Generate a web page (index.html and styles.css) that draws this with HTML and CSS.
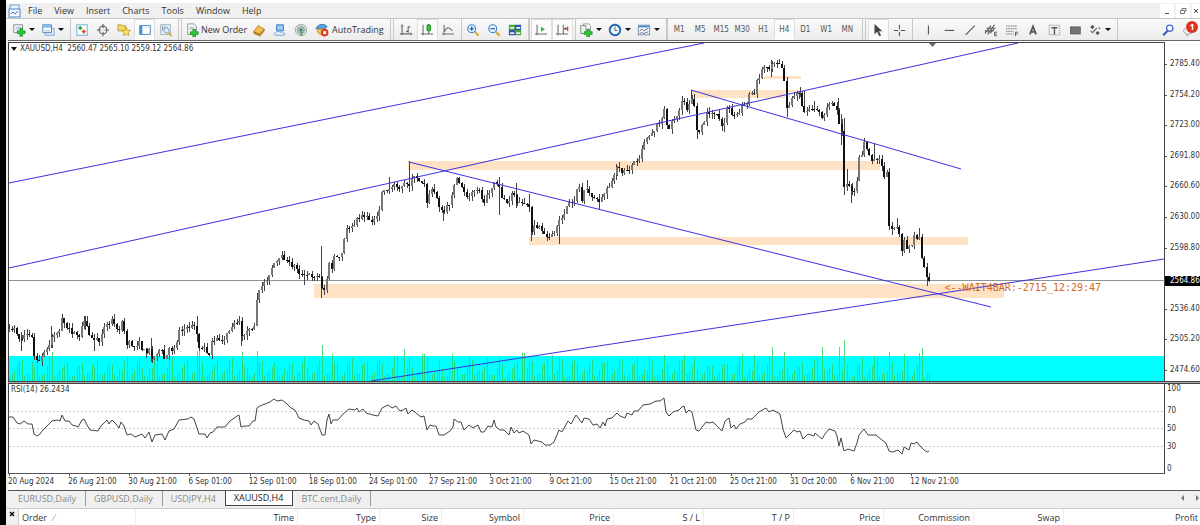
FILE: index.html
```html
<!DOCTYPE html>
<html lang="en">
<head>
<meta charset="utf-8">
<title>XAUUSD,H4</title>
<link rel="stylesheet" href="styles.css">
</head>
<body>
<div class="app">
  <header class="menubar">
    <svg class="app-icon" viewBox="0 0 14 14"><rect x="2" y="1" width="9" height="6" fill="#eaf3fd" stroke="#6f9fd8"/><rect x="1" y="5" width="11" height="8" fill="#f4f9ff" stroke="#4a84cc"/><path d="M3 10l2-2 2 2 3-3" fill="none" stroke="#3d77c2"/></svg>
    <nav class="menu">
      <button>File</button><button>View</button><button>Insert</button><button>Charts</button><button>Tools</button><button>Window</button><button>Help</button>
    </nav>
    <div class="window-controls">
      <button aria-label="Minimize"><svg viewBox="0 0 8 8"><path d="M2 6.500h4" stroke="#555"/></svg></button>
      <button aria-label="Restore"><svg viewBox="0 0 8 8"><path d="M3 3V1.500h4V4H5.500M1.500 3.500h4v3h-4z" fill="none" stroke="#777"/></svg></button>
      <button aria-label="Close"><svg viewBox="0 0 8 8"><path d="M2 2l4 4M6 2l-4 4" stroke="#446"/></svg></button>
    </div>
  </header>

  <div class="toolbar">
    <div class="group">
      <button class="tool drop" aria-label="New chart"><svg viewBox="0 0 16 16"><path d="M2 2h10v9H2z" fill="#f5f9fc" stroke="#7b8794"/><path d="M4 5h6M4 7h4" stroke="#8fb0d0"/><path d="M9 6h3v3h3v3h-3v3H9v-3H6V9h3z" fill="#2dcb35" stroke="#16851e" stroke-width=".8"/></svg></button>
      <button class="tool drop" aria-label="Profiles"><svg viewBox="0 0 16 16"><path d="M5 6h10v8H5z" fill="#dcebfa" stroke="#7fa5d0"/><path d="M2 2h10v9H2z" fill="#f4f9ff" stroke="#3f7fc6"/><path d="M2.500 4h9" stroke="#69a3e2" stroke-width="2"/><path d="M4 9h6" stroke="#9bb"/></svg></button>
    </div>
    <div class="group">
      <button class="tool" aria-label="Market Watch"><svg viewBox="0 0 16 16"><rect x="2" y="2" width="12" height="12" fill="#fff" stroke="#8bc4df" stroke-width="1.500"/><path d="M6 3l2.700 2.700L6 8.400 3.300 5.700z" fill="#35a546"/><path d="M10 7l2.700 2.700L10 12.400 7.300 9.700z" fill="#e0563a"/></svg></button>
      <button class="tool" aria-label="Data Window"><svg viewBox="0 0 16 16"><circle cx="8" cy="8" r="4.500" fill="none" stroke="#666" stroke-width="1.300"/><path d="M8 1v5M8 10v5M1 8h5M10 8h5" stroke="#666" stroke-width="1.300"/></svg></button>
      <button class="tool" aria-label="Navigator"><svg viewBox="0 0 16 16"><path d="M1 2h4l1 1h4v6H1z" fill="#f2d469" stroke="#c29a2d"/><path d="M10.500 5l1.500 3.200 3.500.4-2.600 2.400.7 3.500-3.100-1.800-3.100 1.800.7-3.500L5.600 8.600l3.400-.4z" fill="#fbe15a" stroke="#b3912a" stroke-width=".8"/></svg></button>
      <button class="tool pressed" aria-label="Terminal"><svg viewBox="0 0 16 16"><rect x="2" y="3" width="12" height="10" fill="#fff" stroke="#3e7cc0"/><path d="M3.500 3v10" stroke="#4d8fd8" stroke-width="3"/><path d="M7 5h6" stroke="#cfe1f4"/></svg></button>
      <button class="tool" aria-label="Strategy Tester"><svg viewBox="0 0 16 16"><rect x="2" y="2" width="11" height="11" fill="#eef3f7" stroke="#9aa9b6"/><path d="M4 4v5M6 3v4M9 4v4" stroke="#6e8eae"/><circle cx="8.500" cy="8.500" r="3" fill="#dcecf8" stroke="#7a97b3"/><path d="M11 11l3.500 4" stroke="#d9a62b" stroke-width="2"/></svg></button>
    </div>
    <div class="group handle">
      <button class="tool labelled order"><svg viewBox="0 0 16 16"><path d="M3 1h7l3 3v9H3z" fill="#f7f9fa" stroke="#82909a"/><path d="M5 5h5M5 7h4" stroke="#93a7b7"/><path d="M9 7h3v3h3v3h-3v3H9v-3H6v-3h3z" fill="#2dcb35" stroke="#16851e" stroke-width=".8"/></svg>New Order</button>
      <button class="tool" aria-label="MetaEditor"><svg viewBox="0 0 16 16"><path d="M2 10l5-7 7 4-5 6z" fill="#f1c04a" stroke="#ac7c1c"/><path d="M2 10l7 3 5-6v2l-5 6-7-3z" fill="#c98f23" stroke="#96691a" stroke-width=".6"/></svg></button>
      <button class="tool" aria-label="Virtual hosting"><svg viewBox="0 0 16 16"><path d="M4 2h8v7H4z" fill="#8fc2f5" stroke="#3a78bd"/><path d="M6 5h1M9 5h1" stroke="#fff"/><path d="M3 14c-2 0-2-3 .5-3C4 9 7 9 8 10.500c2-1 3.500 0 3.500 1 3 0 2.500 2.500 1 2.500z" fill="#e6f1fb" stroke="#6f9cc6"/></svg></button>
      <button class="tool" aria-label="Signals"><svg viewBox="0 0 16 16"><circle cx="8" cy="8" r="6.500" fill="#d3dbd8" stroke="#9aa8a2"/><circle cx="8" cy="8" r="3.800" fill="#b9c9c2" stroke="#7d9a90"/><circle cx="8" cy="8" r="1.800" fill="#3e7564"/><path d="M8.500 8v6.500" stroke="#45a552" stroke-width="2"/></svg></button>
      <button class="tool labelled auto"><svg viewBox="0 0 16 16"><path d="M1 6c3-5 9-6 13-2l-3 3z" fill="#5c9fdd" stroke="#3273b4"/><path d="M2 7h10l-3 7-5-2z" fill="#f0ca58" stroke="#b8912d"/><circle cx="11" cy="11" r="4.300" fill="#df3b25"/><rect x="9.300" y="9.300" width="3.400" height="3.400" fill="#fff"/></svg>AutoTrading</button>
    </div>
    <div class="group handle">
      <button class="tool" aria-label="Bar chart"><svg viewBox="0 0 16 16"><path d="M3.500 2v12M1 12.500h14M10.500 4v7M8 9.500h2.500M10.500 4.500H13" fill="none" stroke="#64706b" stroke-width="1.300"/><path d="M2 4l1.500-2L5 4M13 11l2 1.500-2 1.500" fill="none" stroke="#777"/></svg></button>
      <button class="tool pressed" aria-label="Candlesticks"><svg viewBox="0 0 16 16"><path d="M3.500 2v12M1 12.500h14M10 1v11" stroke="#64706b" stroke-width="1.200"/><rect x="8" y="2" width="4" height="7" rx="1" fill="#2ecb3a" stroke="#188424"/></svg></button>
      <button class="tool" aria-label="Line chart"><svg viewBox="0 0 16 16"><path d="M3.500 2v12M1 12.500h14M4 10c2-6 5-6 9-1" fill="none" stroke="#6b7470" stroke-width="1.200"/></svg></button>
    </div>
    <div class="group line">
      <button class="tool" aria-label="Zoom in"><svg viewBox="0 0 16 16"><path d="M10 10l4.500 4.500" stroke="#d8ad37" stroke-width="2.500"/><circle cx="6.500" cy="6.500" r="4.500" fill="#e6f4ff" stroke="#4386ca" stroke-width="1.300"/><path d="M4 6.500h5M6.500 4v5" stroke="#2669b6" stroke-width="1.500"/></svg></button>
      <button class="tool" aria-label="Zoom out"><svg viewBox="0 0 16 16"><path d="M10 10l4.500 4.500" stroke="#d8ad37" stroke-width="2.500"/><circle cx="6.500" cy="6.500" r="4.500" fill="#e6f4ff" stroke="#4386ca" stroke-width="1.300"/><path d="M4 6.500h5" stroke="#2669b6" stroke-width="1.500"/></svg></button>
      <button class="tool" aria-label="Tile windows"><svg viewBox="0 0 16 16"><path d="M1 2h7v6H1z" fill="#48a636"/><path d="M8 2h7v6H8z" fill="#3157ae"/><path d="M1 8h7v6H1z" fill="#3157ae"/><path d="M8 8h7v6H8z" fill="#48a636"/><path d="M2.500 5.500H7M9.500 5.500H14M2.500 11.500H7M9.500 11.500H14" stroke="#eef5fb" stroke-width="2"/></svg></button>
    </div>
    <div class="group handle narrow">
      <button class="tool pressed" aria-label="Auto scroll"><svg viewBox="0 0 16 16"><path d="M3.500 2v12M1 12.500h14" stroke="#64706b" stroke-width="1.200"/><path d="M8 4l4.500 3L8 10z" fill="#2fb83b"/></svg></button>
      <button class="tool pressed" aria-label="Chart shift"><svg viewBox="0 0 16 16"><path d="M3.500 2v12M1 12.500h14M9.500 2v10" stroke="#64706b" stroke-width="1.200"/><path d="M14.500 4v5M14 6.500h-3" stroke="#aa4038" stroke-width="1.300"/><path d="M10 6.500l2.500-2v4z" fill="#c33b30"/></svg></button>
    </div>
    <div class="group line">
      <button class="tool drop" aria-label="Indicators"><svg viewBox="0 0 16 16"><path d="M5 1h6l2 2v9H5z" fill="#fff" stroke="#8a9298"/><path d="M2 3h6v9H2z" fill="#eef3ee" stroke="#748279"/><path d="M9 7h3v3h3v3h-3v3H9v-3H6v-3h3z" fill="#2dcb35" stroke="#16851e" stroke-width=".8"/></svg></button>
      <button class="tool drop" aria-label="Periods"><svg viewBox="0 0 16 16"><circle cx="8" cy="8" r="6" fill="#eef6ff" stroke="#2468ae" stroke-width="2.200"/><path d="M8 4v4.500h3" fill="none" stroke="#456"/></svg></button>
      <button class="tool drop" aria-label="Templates"><svg viewBox="0 0 16 16"><rect x="1.500" y="2.500" width="13" height="11" fill="#eef4f8" stroke="#6a8cae"/><path d="M2 4h12" stroke="#4c8fd0" stroke-width="2"/><path d="M3 9l3-2 2 2 5-3M3 12l3-1 2 1 5-2" fill="none" stroke="#668"/></svg></button>
    </div>
    <div class="group handle narrow periods">
      <button class="tool">M1</button><button class="tool">M5</button><button class="tool">M15</button><button class="tool">M30</button><button class="tool">H1</button><button class="tool pressed">H4</button><button class="tool">D1</button><button class="tool">W1</button><button class="tool">MN</button>
    </div>
    <div class="group handle">
      <button class="tool pressed" aria-label="Cursor"><svg viewBox="0 0 16 16"><path d="M4 1v12l3-3 2.500 5 2-1-2.500-4.500H13z" fill="#444"/></svg></button>
      <button class="tool" aria-label="Crosshair"><svg viewBox="0 0 16 16"><path d="M8.500 2v5M8.500 10v5M2 8.500h5M10 8.500h5" stroke="#555" stroke-width="1.200"/></svg></button>
    </div>
    <div class="group line shapes">
      <button class="tool" aria-label="Vertical line"><svg viewBox="0 0 16 16"><path d="M8.500 3v10" stroke="#555" stroke-width="1.300"/></svg></button>
      <button class="tool" aria-label="Horizontal line"><svg viewBox="0 0 16 16"><path d="M3 8.500h11" stroke="#555" stroke-width="1.300"/></svg></button>
      <button class="tool" aria-label="Trendline"><svg viewBox="0 0 16 16"><path d="M3 13.500L13.500 3" stroke="#555" stroke-width="1.300"/></svg></button>
      <button class="tool" aria-label="Equidistant channel"><svg viewBox="0 0 16 16"><path d="M1 12L8 3M4 13l8-11M1 9h10M3 6h10M7 12l5-6" stroke="#555" stroke-width="1.200"/><path d="M15 10.500h-3v4h3M12 12.500h2.500" fill="none" stroke="#555"/></svg></button>
      <button class="tool" aria-label="Fibonacci retracement"><svg viewBox="0 0 16 16"><path d="M1 3.500h13M1 6.500h13M1 9.500h9M1 12.500h9" stroke="#777" stroke-dasharray="2 .6"/><path d="M12 15v-4.500h3M12 12.500h2.500" fill="none" stroke="#555"/></svg></button>
      <button class="tool" aria-label="Text"><svg viewBox="0 0 16 16"><path d="M4.500 13L8 4l3.500 9M5.500 10h5" fill="none" stroke="#555" stroke-width="2"/></svg></button>
      <button class="tool" aria-label="Text label"><svg viewBox="0 0 16 16"><rect x="2.500" y="2.500" width="12" height="11" fill="none" stroke="#888" stroke-dasharray="1.500 1"/><path d="M5 5.500h7M8.500 5v8" stroke="#555" stroke-width="1.600"/></svg></button>
      <button class="tool" aria-label="Rectangle"><svg viewBox="0 0 16 16"><rect x="3" y="4.500" width="11" height="8" fill="#777" stroke="#555"/></svg></button>
      <button class="tool drop" aria-label="Arrows"><svg viewBox="0 0 16 16"><path d="M5 2l2.500 2.500L5 7 2.500 4.500zM11 9l2.500 2.500L11 14l-2.500-2.500z" fill="#555"/><path d="M3 9l2 2 5-5M12 5l2 2" fill="none" stroke="#666" stroke-width="1.300"/></svg></button>
    </div>
    <div class="group line end">
      <button class="tool" aria-label="Search"><svg viewBox="0 0 16 16"><path d="M7.500 9L2.500 14" stroke="#2a57b0" stroke-width="2.200"/><circle cx="10" cy="6" r="3.600" fill="#f8fbff" stroke="#3f6fc8" stroke-width="1.500"/></svg></button>
      <button class="tool alerts" aria-label="Notifications"><svg viewBox="0 0 16 16"><path d="M4 6c-3 1-3 6 1 6l1 3 2-3h3" fill="#eee" stroke="#999"/></svg><span class="badge">1</span></button>
    </div>
  </div>

  <main class="chart">
    <section class="plot">
      <svg class="layer" viewBox="9 43 1155 338" preserveAspectRatio="none">
        <rect class="volume-zone" x="9" y="356" width="1155" height="25"/>
        <g class="zones">
          <rect x="314" y="284" width="690" height="14"/>
          <rect x="529" y="237" width="439" height="8"/>
          <rect x="408" y="161" width="472" height="9"/>
          <rect x="691" y="90" width="94" height="8"/>
          <rect x="785" y="90" width="16" height="2"/>
          <rect x="764" y="76" width="37" height="3"/>
        </g>
        <path id="volume" class="volume"/>
        <path class="bid-line" d="M9 280.500H1164"/>
        <path id="wicks" class="wicks"/>
        <path id="bulls" class="bulls"/>
        <path id="bears" class="bears"/>
        <path class="trend" d="M9 183L704 43M9 268L1018 43M409 162L991 307M691 90L961 169M371 381L1164 259"/>
        <path class="shift-mark" d="M929 43h7l-3.500 4z"/>
      </svg>
      <h1 class="caption"><span class="caret"></span><span>XAUUSD,H4&nbsp; 2560.47 2565.10 2559.12 2564.86</span></h1>
      <p class="countdown">&lt;--WAIT4BAR:-2715_12:29:47</p>
    </section>
    <div class="scale prices">
      <span>2785.40</span><span>2754.20</span><span>2723.00</span><span>2691.80</span><span>2660.60</span><span>2630.00</span><span>2598.80</span><span></span><span>2536.40</span><span>2505.20</span><span>2474.60</span>
      <strong class="bid">2564.86</strong>
    </div>
    <div class="divider"></div>
    <section class="rsi">
      <svg class="layer" viewBox="9 384 1155 89" preserveAspectRatio="none">
        <path class="levels" d="M9 411.500H1164M9 428.500H1164M9 446.500H1164"/>
        <path id="rsi" class="rsi-line"/>
      </svg>
      <h2 class="caption">RSI(14) 26.2434</h2>
    </section>
    <div class="scale levels-scale"><span>100</span><span>70</span><span>50</span><span>30</span><span>0</span></div>
    <div class="times">
      <span>20 Aug 2024</span><span>26 Aug 21:00</span><span>30 Aug 21:00</span><span>6 Sep 01:00</span><span>12 Sep 01:00</span><span>18 Sep 01:00</span><span>24 Sep 01:00</span><span>27 Sep 21:00</span><span>3 Oct 21:00</span><span>9 Oct 21:00</span><span>15 Oct 21:00</span><span>21 Oct 21:00</span><span>25 Oct 21:00</span><span>31 Oct 20:00</span><span>6 Nov 21:00</span><span>12 Nov 21:00</span>
    </div>
  </main>

  <div class="tabs">
    <button>EURUSD,Daily</button><button>GBPUSD,Daily</button><button>USDJPY,H4</button><button class="active">XAUUSD,H4</button><button>BTC.cent,Daily</button>
    <div class="tab-arrows"><button aria-label="Previous tab"><svg viewBox="0 0 6 8"><path d="M4 1v6L1 4z" fill="#777"/></svg></button><button aria-label="Next tab"><svg viewBox="0 0 6 8"><path d="M2 1v6l3-3z" fill="#777"/></svg></button></div>
  </div>

  <div class="terminal">
    <button class="close" aria-label="Close terminal"><svg viewBox="0 0 8 8"><path d="M2 2l4 4M6 2l-4 4" stroke="#000" stroke-width="1.300"/></svg></button>
    <table class="orders">
      <colgroup><col class="c-order"><col class="c-time"><col class="c-type"><col class="c-size"><col class="c-type"><col class="c-num"><col class="c-num"><col class="c-num"><col class="c-num"><col class="c-num"><col class="c-num"><col></colgroup>
      <thead><tr><th class="first">Order <span class="sort">⁄</span></th><th>Time</th><th>Type</th><th>Size</th><th>Symbol</th><th>Price</th><th>S / L</th><th>T / P</th><th>Price</th><th>Commission</th><th>Swap</th><th>Profit</th></tr></thead>
    </table>
  </div>
</div>
<script src="chart.js"></script>
</body>
</html>
```
FILE: styles.css
```css
* { box-sizing: border-box; }

body {
  margin: 0;
  background: #000;
  color: #333;
  font-family: "Open Sans", "Noto Sans", sans-serif;
  font-size: 9px;
}

button {
  margin: 0;
  padding: 0;
  border: 0;
  background: none;
  color: inherit;
  font: inherit;
  white-space: nowrap;
}

svg { display: block; }

.app {
  display: flex;
  flex-direction: column;
  height: 100vh;
  margin-left: 6px;
  border-top: 3px solid #fff;
  background: #f0f0f0;
  overflow: hidden;
}

.menubar {
  display: flex;
  flex: none;
  align-items: center;
  height: 15px;
  padding-left: 2px;
}

.app-icon { width: 14px; height: 14px; margin-right: 6px; }

.menu { display: flex; gap: 12px; }

.window-controls { display: flex; gap: 2px; margin-left: auto; }
.window-controls button { padding: 3px; background: #fff; }
.window-controls svg { width: 8px; height: 8px; }
.window-controls button:last-child { padding: 3px 0; }

.toolbar {
  display: flex;
  flex: none;
  align-items: stretch;
  height: 22px;
  padding-left: 4px;
  border-top: 1px solid #c4c4c4;
  background: linear-gradient(#fafafa, #ececec);
}

.group { display: flex; align-items: stretch; padding-right: 2px; border-right: 1px solid #c8c8c8; }
.group.line { padding-left: 1px; }
.group.handle { margin-left: 2px; padding-left: 2px; border-left: 1px solid #c8c8c8; }
.group.narrow { margin-left: 0; padding-left: 1px; }

.tool {
  position: relative;
  display: flex;
  flex: none;
  align-items: center;
  justify-content: center;
  width: 21px;
}
.tool svg { width: 14px; height: 14px; }
.tool.pressed { background: #fbfbfb; border: 1px solid #dedede; border-bottom-color: #fff; }
.tool.drop { width: 29px; justify-content: flex-start; padding-left: 2px; }
.tool.drop::after {
  content: "";
  margin-left: 3px;
  border: 3px solid transparent;
  border-top-color: #111;
  border-bottom: 0;
}
.tool.labelled { width: auto; gap: 2px; padding: 0 1px; }
.tool.auto { gap: 3px; padding: 0 4px; }
.group.periods { padding-right: 4px; color: #555; font-family: "DejaVu Sans Condensed", "Open Sans", sans-serif; font-size: 8px; }
.group.shapes { padding-left: 5px; }

.group.end { margin-left: auto; padding-right: 1px; border: 0; }
.badge {
  position: absolute;
  top: 2px;
  left: 8px;
  width: 12px;
  height: 12px;
  border-radius: 6px;
  background: #dc3324;
  color: #fff;
  font-weight: 700;
  line-height: 12px;
  text-align: center;
}

.chart {
  display: grid;
  flex: 1;
  grid-template-columns: 1fr 35px;
  grid-template-rows: 339fr 3px 90fr 16px;
  min-height: 0;
  margin-left: 2px;
  padding-top: 1px;
  border-top: 1px solid #666;
  border-bottom: 1px solid #555;
  background: #fff;
  font-family: "DejaVu Sans Condensed", "Open Sans", sans-serif;
  font-size: 8px;
  line-height: 10px;
}

.plot, .rsi { position: relative; min-height: 0; border-left: 1px solid #444; border-right: 1px solid #444; }
.plot { border-top: 1px solid #444; }
.rsi { border-bottom: 1px solid #555; }
.layer { width: 100%; height: 100%; }

.volume-zone { fill: #00ffff; }
.zones { fill: #ffe2c4; }
.volume { fill: #30d060; fill-opacity: .8; shape-rendering: crispEdges; }
.bid-line { stroke: #8c9498; }
.wicks { fill: #444; shape-rendering: crispEdges; }
.bulls { fill: #777; shape-rendering: crispEdges; }
.bears { fill: #111; shape-rendering: crispEdges; }
.trend { fill: none; stroke: #3c32e0; }
.shift-mark { fill: #666; }
.levels { fill: none; stroke: #c8c8c8; stroke-dasharray: 2 2; }
.rsi-line { fill: none; stroke: #444; }

.caption {
  position: absolute;
  top: 1px;
  left: 2px;
  display: flex;
  align-items: center;
  gap: 3px;
  margin: 0;
  font-size: 8px;
  font-weight: 400;
}
.caret { border: 3px solid transparent; border-top: 4px solid #111; border-bottom: 0; }

.countdown {
  position: absolute;
  top: 71%;
  left: 81%;
  margin: 0;
  color: #d2691e;
  font-family: "DejaVu Sans Mono", monospace;
  font-size: 10px;
  white-space: nowrap;
}

.scale { position: relative; display: flex; flex-direction: column; justify-content: space-between; min-height: 0; }
.scale span { min-height: 10px; padding-left: 5px; }
.scale span::before { content: ""; float: left; width: 2px; height: 1px; margin: 5px 0 0 -5px; background: #555; }
.prices { padding: 17px 0 6px; }
.bid {
  position: absolute;
  top: 69%;
  left: 0;
  width: 100%;
  padding-left: 5px;
  background: #000;
  color: #fff;
  font-weight: 400;
}

.divider { grid-column: 1 / -1; border-top: 1px solid #444; border-bottom: 1px solid #444; background: #aaa; }
.levels-scale span { padding-left: 2px; }
.levels-scale span::before { display: none; }
.levels-scale span:first-child { margin-bottom: 4px; }
.levels-scale span:last-child { margin-top: 4px; }

.times { display: flex; grid-column: 1; align-items: center; min-width: 0; }
.times span { position: relative; flex: 0 0 5.2%; white-space: nowrap; }
.times span::before { content: ""; position: absolute; top: -3px; left: 1px; width: 1px; height: 2px; background: #555; }

.tabs {
  display: flex;
  flex: none;
  align-items: flex-start;
  height: 17px;
  padding-left: 4px;
  color: #888;
}
.tabs > button { height: 15px; padding: 0 9px 0 8px; border-right: 1px solid #999; line-height: 14px; }
.tabs > .active { border: 1px solid #444; border-top: 0; background: #fff; color: #222; }
.tabs > button:has(+ .active) { border-right: 0; }
.tab-arrows { display: flex; gap: 8px; margin-left: auto; padding-top: 3px; }
.tab-arrows svg { width: 6px; height: 8px; }

.terminal { display: flex; flex: none; align-items: flex-start; height: 17px; border-top: 1px solid #ccc; background: #f0f0f0; }
.close { width: 12px; padding: 1px 2px; }
.close svg { width: 8px; height: 8px; }
.orders { width: 100%; table-layout: fixed; border-collapse: collapse; background: #fff; border-left: 1px solid #ccc; }
.orders th { height: 17px; padding: 0 3px; border-right: 1px solid #eee; font-weight: 400; line-height: 16px; text-align: right; white-space: nowrap; }
.orders th:last-child { padding-right: 2px; border: 0; }
.orders .first { text-align: left; }
.sort { padding-left: 4px; color: #999; }
.c-order { width: 117px; }
.c-time { width: 162px; }
.c-type { width: 82px; }
.c-size { width: 62px; }
.c-num { width: 90px; }
```
FILE: chart.js
```js
// Closing levels as "x,y" pairs in plot units.
const closes = `9,331 14,327 17,333 20,341 23,335 27,334 33,338 34,356 37,361 40,363 42,357 45,352 48,348 50,345 52,336 56,333 60,331 62,320 65,326 68,328 71,332 75,334 79,336 82,327 84,323 87,328 89,335 92,339 96,340 99,340 102,332 106,325 110,324 112,318 116,326 119,330 122,321 124,330 127,344 130,343 134,347 139,343 143,350 148,352 150,345 152,359 157,352 162,352 165,362 169,350 172,350 177,342 179,329 185,329 190,327 194,325 196,328 199,347 202,348 206,348 208,357 212,343 218,339 222,340 226,337 231,327 236,323 239,321 241,336 245,333 249,331 253,326 256,325 257,300 259,292 262,285 266,280 270,275 273,265 277,262 282,257 286,260 291,265 296,267 300,274 304,276 309,275 316,276 321,278 322,287 325,291 326,288 328,271 330,254 332,270 334,255 338,259 342,253 344,240 348,226 352,228 358,218 362,215 368,219 374,220 378,217 380,205 382,192 386,189 391,190 395,182 400,190 405,183 409,186 412,176 415,178 419,180 424,184 427,202 430,189 436,193 440,210 444,212 450,202 454,184 456,179 460,184 463,187 466,198 470,196 475,187 480,192 484,204 487,195 491,189 494,181 498,186 501,196 505,200 508,205 513,192 517,205 522,202 527,205 530,210 531,232 535,225 540,227 545,234 550,238 554,233 558,224 560,219 565,213 569,202 573,204 576,190 579,187 582,201 585,188 590,194 595,199 600,203 604,194 607,188 612,181 617,168 622,172 626,170 630,168 635,160 640,157 643,143 648,136 653,131 658,123 662,118 664,110 667,126 669,127 673,119 678,114 681,103 684,102 687,109 691,96 693,100 695,112 697,131 700,132 704,121 708,112 712,112 717,114 722,125 725,122 728,104 732,116 736,114 738,118 742,105 746,106 750,93 754,94 757,81 761,72 764,66 767,65 770,71 772,62 776,61 780,64 783,68 785,94 787,109 790,103 795,94 800,91 803,112 807,111 811,107 815,108 820,111 823,119 826,111 829,106 832,103 835,106 838,110 840,140 842,130 844,187 846,184 850,189 854,190 857,182 859,158 862,154 864,142 867,148 870,160 873,159 876,158 881,163 884,175 887,174 889,224 893,228 897,225 900,239 902,249 905,236 907,248 912,246 914,235 917,240 919,239 921,252 923,264 926,272 928,285 929,280`;

const spikes = `21,332,351 51,326,348 85,316,330 94,340,351 112,316,326 146,348,358 151,338,362 197,316,342 239,316,322 241,330,346 257,293,326 304,272,285 321,246,298 389,177,194 409,161,192 443,210,221 499,177,215 516,183,208 529,194,212 531,207,241 559,216,244 587,180,193 599,196,209 616,164,180 691,90,102 697,110,139 724,118,132 771,60,77 787,92,117 800,87,97 804,91,113 814,101,112 838,98,115 841,114,145 844,118,195 847,169,189 851,184,203 864,138,154 874,143,158 889,178,229 892,222,235 897,218,228 902,239,256 919,228,240 927,265,286`;

const volumes = `21,360 51,352 126,357 197,351 199,345 242,352 257,351 321,345 331,354 405,349 423,354 451,354 500,357 523,353 551,355 771,347 785,352 741,354 684,355 822,347 839,347 844,340 889,352 904,354 919,353 921,348`;

const rsi = "9,417 13,417 17,423 20,424 24,421 28,424 32,424 34,434 37,436 40,434 43,430 46,427 50,423 52,421 57,420 60,421 62,415 65,421 69,421 72,425 76,426 78,427 82,420 84,419 87,425 90,430 98,431 101,426 105,422 107,420 109,424 112,420 116,424 119,428 121,422 124,426 127,435 131,434 135,437 142,434 145,438 149,432 152,442 155,435 162,434 165,440 169,431 174,429 179,420 188,419 191,417 194,419 199,434 205,434 207,438 210,433 213,432 217,427 225,427 230,421 237,416 239,415 241,427 245,426 249,426 253,421 255,421 257,408 260,406 265,404 270,402 274,399 277,401 282,400 286,403 291,408 295,410 299,418 304,420 309,421 311,425 314,421 318,424 322,435 325,435 327,420 329,414 331,424 333,420 338,420 343,414 349,409 355,410 357,408 359,412 363,409 366,413 373,415 378,416 382,408 388,405 392,408 396,406 400,411 403,410 406,408 408,414 412,410 416,413 421,417 424,416 427,430 430,425 433,426 436,426 439,435 444,435 450,431 453,427 454,419 458,422 461,422 464,430 469,425 473,428 478,425 481,432 484,432 488,426 492,427 494,420 496,427 500,430 504,430 509,435 511,427 514,433 517,430 519,433 523,431 529,435 531,444 534,440 542,442 545,445 550,445 554,442 559,430 562,432 568,421 571,424 576,415 582,423 584,418 589,419 593,425 597,424 600,428 603,422 605,426 607,419 612,418 617,413 620,416 625,418 627,413 632,415 634,411 638,411 643,405 650,404 656,401 660,401 664,398 666,412 669,416 673,412 679,410 682,407 684,406 686,413 689,410 692,412 696,430 699,431 706,422 709,423 713,422 717,426 722,431 725,421 729,418 731,428 734,425 736,429 740,424 745,422 747,419 752,419 759,412 764,409 766,408 769,412 773,410 780,414 783,429 786,438 790,434 794,430 797,432 800,431 803,439 808,434 814,436 815,433 822,439 825,434 829,429 835,431 837,436 839,446 841,438 844,451 848,449 854,451 857,443 859,435 864,429 868,435 876,435 882,440 886,443 889,451 893,452 898,450 902,454 904,447 909,450 911,443 914,444 917,442 920,446 924,450 927,452 929,451";

const parse = text => text.trim().split(/\s+/).map(p => p.split(",").map(Number));
const points = parse(closes);
const spikeList = parse(spikes);
const volumeList = parse(volumes);

function levelAt(x) {
  let i = 1;
  while (i < points.length - 1 && points[i][0] < x) i++;
  const [x0, y0] = points[i - 1];
  const [x1, y1] = points[i];
  const t = Math.min(1, Math.max(0, (x - x0) / (x1 - x0)));
  return y0 + (y1 - y0) * t;
}

let seed = 7;
const random = () => (seed = (seed * 16807) % 2147483647) / 2147483647;

let wicks = "", bulls = "", bears = "", volume = "";
let open = levelAt(9);
const cycle = [5, 7, 10, 16, 22, 20];

for (let n = 0; n <= 368; n++) {
  const x = Math.round(9 + n * 2.5);
  const close = Math.round(levelAt(x) + (random() - 0.5) * 4);
  const top = Math.round(Math.min(open, close));
  const height = Math.max(1, Math.round(Math.abs(close - open)));
  const high = top - Math.round(random() * 5);
  const low = top + height + Math.round(random() * 5);
  wicks += `M${x} ${high}h1V${low}h-1z`;
  const body = `M${x - 1} ${top}h2v${height}h-2z`;
  if (close < open) bulls += body; else bears += body;
  open = close;

  const special = volumeList.find(v => Math.abs(v[0] - x) <= 1);
  const size = special ? 381 - special[1] : Math.round(cycle[n % 6] * (0.6 + random() * 0.6));
  volume += `M${x} 381h1v${-size}h-1z`;
}
for (const [x, high, low] of spikeList) wicks += `M${x} ${high}h1V${low}h-1z`;

document.getElementById("wicks").setAttribute("d", wicks);
document.getElementById("bulls").setAttribute("d", bulls);
document.getElementById("bears").setAttribute("d", bears);
document.getElementById("volume").setAttribute("d", volume);
document.getElementById("rsi").setAttribute("d", "M" + rsi.replace(/ /g, "L"));
```
